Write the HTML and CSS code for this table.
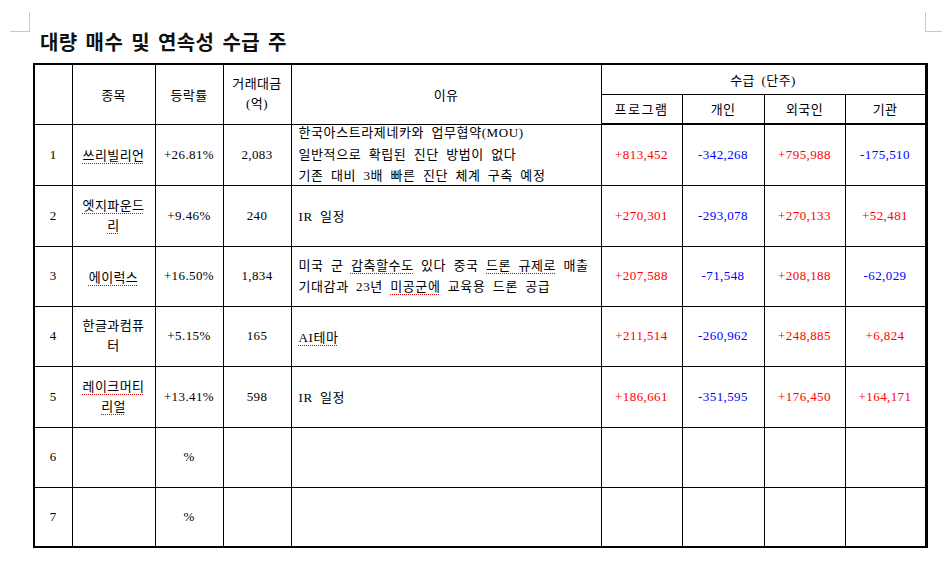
FILE: index.html
```html
<!DOCTYPE html>
<html lang="ko">
<head>
<meta charset="utf-8">
<title>대량 매수 및 연속성 수급 주</title>
<link rel="stylesheet" href="styles.css">
</head>
<body>
<div class="mark mark-tl"></div>
<div class="mark mark-tr"></div>
<h1 class="title">대량 매수 및 연속성 수급 주</h1>
<table class="grid">
  <colgroup>
    <col class="c-no"><col class="c-name"><col class="c-rate"><col class="c-amt"><col class="c-why">
    <col class="c-f1"><col class="c-f2"><col class="c-f3"><col class="c-f4">
  </colgroup>
  <thead>
    <tr class="hr1">
      <th rowspan="2"></th>
      <th rowspan="2">종목</th>
      <th rowspan="2">등락률</th>
      <th rowspan="2" class="two">거래대금<br>(억)</th>
      <th rowspan="2">이유</th>
      <th colspan="4" class="flow">수급 (단주)</th>
    </tr>
    <tr class="hr2">
      <th class="wide">프로그램</th><th>개인</th><th>외국인</th><th>기관</th>
    </tr>
  </thead>
  <tbody>
    <tr class="r61">
      <td class="num">1</td>
      <td><span class="sp">쓰리빌리언</span></td>
      <td class="num">+26.81%</td>
      <td class="num">2,083</td>
      <td class="why"><div class="lines3">한국아스트라제네카와 업무협약(MOU)<br>일반적으로 확립된 진단 방법이 없다<br>기존 대비 3배 빠른 진단 체계 구축 예정</div></td>
      <td class="num up">+813,452</td><td class="num dn">-342,268</td><td class="num up">+795,988</td><td class="num dn">-175,510</td>
    </tr>
    <tr class="r61">
      <td class="num">2</td>
      <td class="two"><span class="sp">엣지파운드</span><br><span class="sp">리</span></td>
      <td class="num">+9.46%</td>
      <td class="num">240</td>
      <td class="why">IR 일정</td>
      <td class="num up">+270,301</td><td class="num dn">-293,078</td><td class="num up">+270,133</td><td class="num up">+52,481</td>
    </tr>
    <tr class="r60">
      <td class="num">3</td>
      <td><span class="sp">에이럭스</span></td>
      <td class="num">+16.50%</td>
      <td class="num">1,834</td>
      <td class="why"><div class="lines2">미국 군 <span class="sp">감축할수도</span> 있다 중국 <span class="gr">드론 규제로</span> 매출<br>기대감과 23년 <span class="sp">미공군에</span> 교육용 드론 공급</div></td>
      <td class="num up">+207,588</td><td class="num dn">-71,548</td><td class="num up">+208,188</td><td class="num dn">-62,029</td>
    </tr>
    <tr class="r60">
      <td class="num">4</td>
      <td class="two">한글과컴퓨<br>터</td>
      <td class="num">+5.15%</td>
      <td class="num">165</td>
      <td class="why"><span class="sp">AI테마</span></td>
      <td class="num up">+211,514</td><td class="num dn">-260,962</td><td class="num up">+248,885</td><td class="num up">+6,824</td>
    </tr>
    <tr class="r61">
      <td class="num">5</td>
      <td class="two"><span class="sp">레이크머티</span><br><span class="sp">리얼</span></td>
      <td class="num">+13.41%</td>
      <td class="num">598</td>
      <td class="why">IR 일정</td>
      <td class="num up">+186,661</td><td class="num dn">-351,595</td><td class="num up">+176,450</td><td class="num up">+164,171</td>
    </tr>
    <tr class="r60">
      <td class="num">6</td><td></td><td class="num">%</td><td></td><td class="why"></td>
      <td></td><td></td><td></td><td></td>
    </tr>
    <tr class="r60">
      <td class="num">7</td><td></td><td class="num">%</td><td></td><td class="why"></td>
      <td></td><td></td><td></td><td></td>
    </tr>
  </tbody>
</table>
</body>
</html>
```
FILE: styles.css
```css
html, body {
  margin: 0;
  padding: 0;
  background: #ffffff;
}
body {
  position: relative;
  width: 942px;
  height: 577px;
  overflow: hidden;
  font-family: "Liberation Serif", "Noto Sans CJK KR", serif;
  font-size: 13px;
  color: #000000;
}

.mark {
  position: absolute;
  top: 12px;
  height: 19px;
  border-color: #c8c8c8;
  border-style: solid;
}
.mark-tl {
  left: 10px;
  width: 19px;
  border-width: 0 1px 1px 0;
}
.mark-tr {
  left: 925px;
  width: 17px;
  border-width: 0 0 1px 1px;
}

.title {
  margin: 0 0 0 40px;
  padding-top: 29px;
  height: 34px;
  line-height: 26px;
  font-family: "Noto Sans CJK KR", sans-serif;
  font-size: 20px;
  font-weight: 700;
  letter-spacing: 0.4px;
  word-spacing: 2px;
  color: #111111;
  white-space: nowrap;
}

.grid {
  margin-left: 33px;
  width: 892px;
  table-layout: fixed;
  border-collapse: collapse;
  border: 2px solid #000;
  border-right-width: 3px;
}
.c-no { width: 38px; }
.c-name { width: 83px; }
.c-rate { width: 68px; }
.c-amt { width: 68px; }
.c-why { width: 310px; }
.c-f1 { width: 81px; }
.c-f2 { width: 82px; }
.c-f3 { width: 81px; }
.c-f4 { width: 81px; }

.grid th, .grid td {
  border: 1px solid #000;
  padding: 0;
  text-align: center;
  vertical-align: middle;
  font-weight: 400;
  letter-spacing: 0.4px;
  overflow: visible;
}
.hr1 { height: 30px; }
.hr2 { height: 30px; }
.hr2 th { border-bottom: 2px solid #000; }
.hr2 th.wide { letter-spacing: 1.5px; }
.grid th.flow { word-spacing: 3px; }
.r61 { height: 61px; }
.r60 { height: 60px; }

.two { line-height: 20px; }

.num {
  letter-spacing: 0.7px;
}
.up { color: #ff0000; }
.dn { color: #0000ff; }

.grid td.why {
  text-align: left;
  padding-left: 7px;
  letter-spacing: 0.6px;
  word-spacing: 3.5px;
  white-space: nowrap;
}
.lines3 {
  line-height: 21.5px;
  margin: -3px 0;
}
.lines2 {
  line-height: 21px;
}

.sp {
  text-decoration: underline dotted #e00000;
  text-decoration-thickness: 1px;
  text-underline-offset: 3px;
}
.gr {
  text-decoration: underline dotted #2030ff;
  text-decoration-thickness: 1px;
  text-underline-offset: 3px;
}
```
